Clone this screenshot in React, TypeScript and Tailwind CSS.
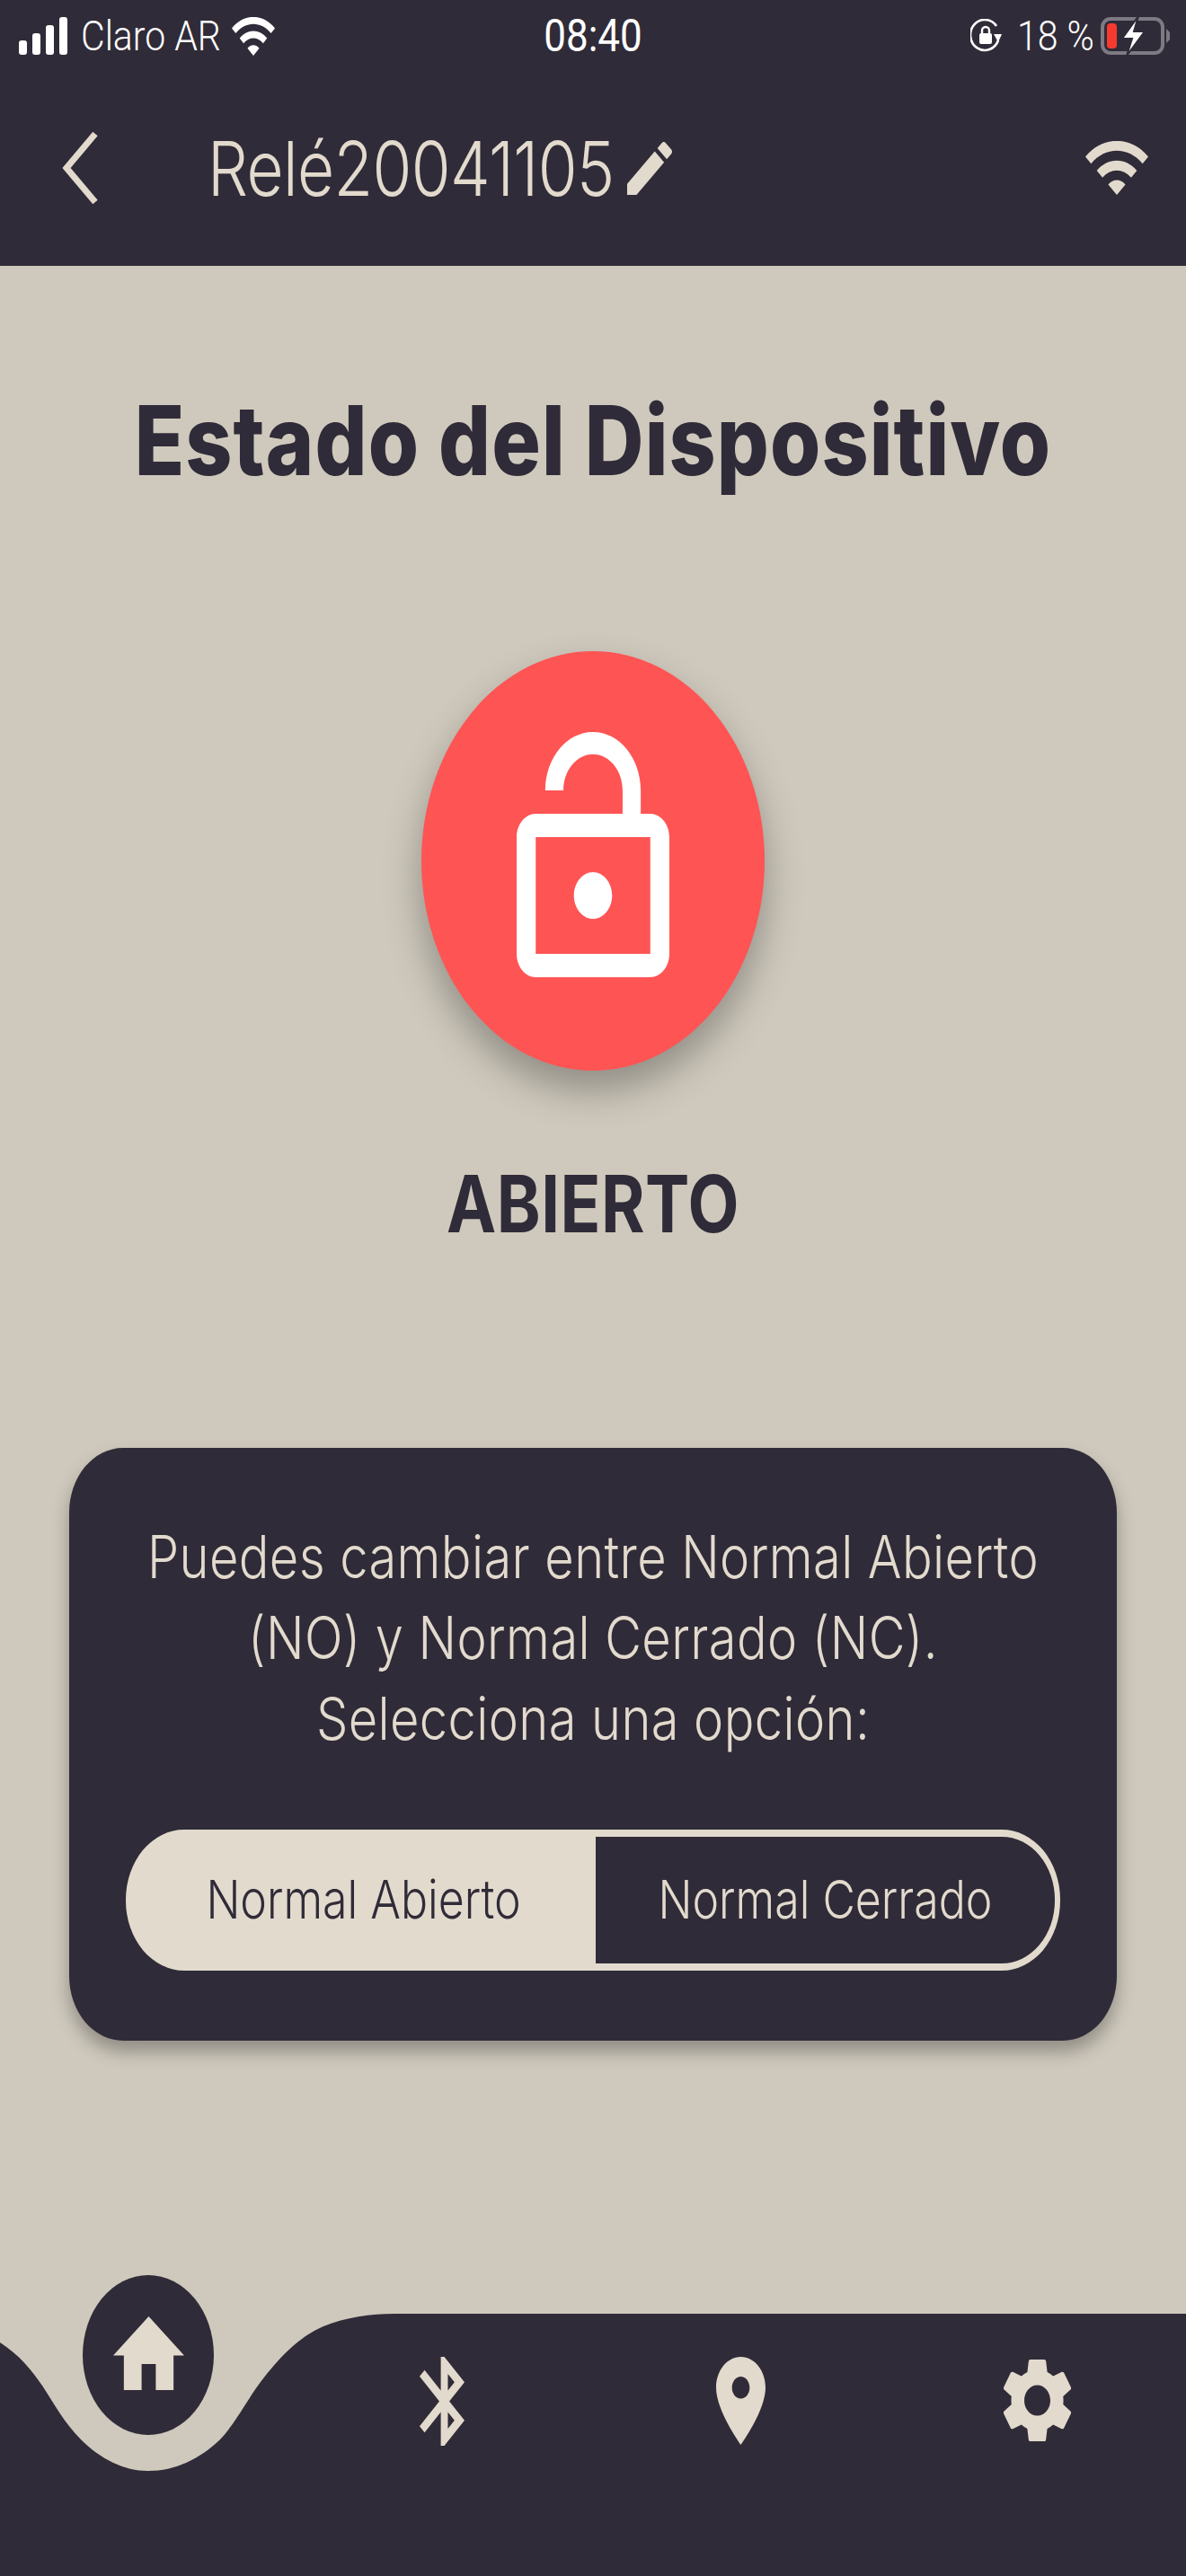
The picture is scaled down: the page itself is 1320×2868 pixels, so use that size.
const DARK = '#302b38'

function Glyph({ box, d, className }: { box: string; d: string; className: string }) {
  return (
    <svg viewBox={box} preserveAspectRatio="none" fill="currentColor" className={className}>
      <path d={d} fillRule="evenodd" />
    </svg>
  )
}

const WIFI =
  'M1 9l2 2c4.97-4.97 13.03-4.97 18 0l2-2C16.93 2.93 7.08 2.93 1 9zm8 8l3 3 3-3c-1.65-1.66-4.34-1.66-6 0zm-4-4l2 2c2.76-2.76 7.24-2.76 10 0l2-2C15.14 9.14 8.87 9.14 5 13z'
const EDIT =
  'M3 17.25V21h3.75L17.81 9.94l-3.75-3.75L3 17.25zM20.71 7.04c.39-.39.39-1.02 0-1.41l-2.34-2.34c-.39-.39-1.02-.39-1.41 0l-1.83 1.83 3.75 3.75 1.83-1.83z'
const LOCK_OPEN =
  'M12 17c1.1 0 2-.9 2-2s-.9-2-2-2-2 .9-2 2 .9 2 2 2zm6-9h-1V6c0-2.76-2.24-5-5-5S7 3.24 7 6h1.9c0-1.71 1.39-3.1 3.1-3.1 1.71 0 3.1 1.39 3.1 3.1v2H6c-1.1 0-2 .9-2 2v10c0 1.1.9 2 2 2h12c1.1 0 2-.9 2-2V10c0-1.1-.9-2-2-2zm0 12H6V10h12v10z'
const HOME = 'M10 20v-6h4v6h5v-8h3L12 3 2 12h3v8z'
const BLUETOOTH =
  'M17.71 7.71L12 2h-1v7.59L6.41 5 5 6.41 10.59 12 5 17.59 6.41 19 11 14.41V22h1l5.71-5.71-4.3-4.29 4.3-4.29zM13 5.83l1.88 1.88L13 9.59V5.83zm1.88 10.46L13 18.17v-3.76l1.88 1.88z'
const PLACE =
  'M12 2C8.13 2 5 5.13 5 9c0 5.25 7 13 7 13s7-7.75 7-13c0-3.87-3.13-7-7-7zm0 9.5c-1.38 0-2.5-1.12-2.5-2.5s1.12-2.5 2.5-2.5 2.5 1.12 2.5 2.5-1.12 2.5-2.5 2.5z'
const SETTINGS =
  'M19.14 12.94c.04-.3.06-.61.06-.94 0-.32-.02-.64-.07-.94l2.03-1.58c.18-.14.23-.41.12-.61l-1.92-3.32c-.12-.22-.37-.29-.59-.22l-2.39.96c-.5-.38-1.03-.7-1.62-.94l-.36-2.54c-.04-.24-.24-.41-.48-.41h-3.84c-.24 0-.43.17-.47.41l-.36 2.54c-.59.24-1.13.57-1.62.94l-2.39-.96c-.22-.08-.47 0-.59.22L2.74 8.87c-.12.21-.08.47.12.61l2.03 1.58c-.05.3-.09.63-.09.94s.02.64.07.94l-2.03 1.58c-.18.14-.23.41-.12.61l1.92 3.32c.12.22.37.29.59.22l2.39-.96c.5.38 1.03.7 1.62.94l.36 2.54c.05.24.24.41.48.41h3.84c.24 0 .44-.17.47-.41l.36-2.54c.59-.24 1.13-.56 1.62-.94l2.39.96c.22.08.47 0 .59-.22l1.92-3.32c.12-.22.07-.47-.12-.61l-2.01-1.58zM12 15.6c-1.98 0-3.6-1.62-3.6-3.6s1.62-3.6 3.6-3.6 3.6 1.62 3.6 3.6-1.62 3.6-3.6 3.6z'

function StatusBar() {
  return (
    <div className="flex h-[78px] items-center pt-[2px] text-white font-['Roboto',sans-serif] text-[41px] font-light leading-none">
      <svg viewBox="0 0 54 42" fill="white" className="ml-[21px] h-[42px] w-[54px]">
        <rect x="0" y="26" width="9" height="16" rx="3" />
        <rect x="15" y="18" width="9" height="24" rx="3" />
        <rect x="30" y="9" width="9" height="33" rx="3" />
        <rect x="45" y="0" width="9" height="42" rx="3" />
      </svg>
      <span className="ml-[15px] w-[153px] scale-y-[1.12] whitespace-nowrap">Claro AR</span>
      <Glyph box="1 4.5 22 15.5" d={WIFI} className="ml-[15px] h-[43px] w-[48px]" />
      <span className="ml-[299px] w-[110px] scale-y-[1.12] whitespace-nowrap text-center text-[44px] font-normal">08:40</span>
      <svg viewBox="0 0 35 38" fill="none" stroke="white" className="ml-[365px] h-[38px] w-[35px]">
        <path d="M29 8A16 17 0 1 0 31 24" strokeWidth="2.6" />
        <path d="M26 17l9 0-4 9z" fill="white" stroke="none" />
        <rect x="10" y="16" width="14" height="12" rx="2" fill="white" stroke="none" />
        <path d="M13 16v-3a4 4 0 0 1 8 0v3" strokeWidth="2.4" />
      </svg>
      <span className="ml-[17px] w-[83px] scale-y-[1.12] whitespace-nowrap">18 %</span>
      <svg viewBox="0 0 80 44" className="ml-[10px] h-[44px] w-[80px]">
        <rect x="2" y="3" width="67" height="38" rx="9" fill="none" stroke="#7d7a83" strokeWidth="4" />
        <rect x="7" y="8" width="11" height="28" rx="4" fill="#f63a30" />
        <path d="M73 14l4 4v8l-4 4z" fill="#7d7a83" />
        <path d="M42 0L24 25h11l-6 19 20-27H37z" fill="white" stroke={DARK} strokeWidth="2" />
      </svg>
    </div>
  )
}

function AppBar() {
  return (
    <div className="flex h-[218px] items-center text-[#e2dacd]">
      <svg viewBox="0 0 40 80" fill="none" stroke="currentColor" strokeWidth="7" className="ml-[69px] h-[80px] w-[40px]">
        <path d="M37 2L5 40l32 38" />
      </svg>
      <span className="ml-[122px] w-[447px] scale-y-[1.19] whitespace-nowrap text-[71px] font-light leading-none tracking-[-0.6px]">
        Relé20041105
      </span>
      <Glyph box="3 3 18 18" d={EDIT} className="ml-[20px] h-[59px] w-[50px]" />
      <Glyph box="1 4.5 22 15.5" d={WIFI} className="ml-auto mr-[42px] h-[60px] w-[70px]" />
    </div>
  )
}

function ModeSwitch() {
  return (
    <div className="mx-[63px] mt-[78px] flex h-[157px] rounded-[65px/78px] border-x-[6px] border-y-[8px] border-[#e2dacd] bg-[#e2dacd] text-[50px] font-light">
      <div className="flex w-[517px] items-center justify-center text-[#302b38]">
        <span className="scale-y-[1.19]">Normal Abierto</span>
      </div>
      <div className="flex flex-1 items-center justify-center rounded-tr-[59px_70px] rounded-br-[59px_70px] bg-[#302b38] text-[#e2dacd]">
        <span className="scale-y-[1.19]">Normal Cerrado</span>
      </div>
    </div>
  )
}

function BottomNav() {
  return (
    <div className="relative h-[292px] text-[#e2dacd]">
      <svg viewBox="0 0 1320 292" preserveAspectRatio="none" fill={DARK} className="absolute inset-0 h-full w-full">
        <path d="M0 32C22 46 36 64 47 80C60 100 72 122 90 140C112 162 138 175 165 175C195 175 222 162 245 140C262 122 275 96 290 76C310 50 332 26 360 14C385 4 412 0 440 0H1320V292H0Z" />
      </svg>
      <div className="absolute left-[92px] top-[-43px] flex h-[178px] w-[146px] items-center justify-center rounded-[50%] bg-[#302b38]">
        <Glyph box="2 3 20 17" d={HOME} className="mt-[-4px] h-[82px] w-[79px]" />
      </div>
      <div className="relative flex items-start pl-[467px] pt-[48px]">
        <Glyph box="5 2 12.71 20" d={BLUETOOTH} className="h-[99px] w-[50px]" />
        <Glyph box="5 2 14 20" d={PLACE} className="ml-[280px] h-[98px] w-[55px]" />
        <Glyph box="2.7 2 18.6 20" d={SETTINGS} className="ml-[265px] mt-px h-[95px] w-[75px]" />
      </div>
    </div>
  )
}

export default function App() {
  return (
    <div className="flex h-[2868px] w-[1320px] flex-col overflow-hidden bg-[#cfc9bd] font-['Inter',sans-serif]">
      <header className="h-[296px] bg-[#302b38]">
        <StatusBar />
        <AppBar />
      </header>

      <main className="flex flex-1 flex-col items-center">
        <h1 className="mt-[134px] flex h-[120px] items-center text-[#302b38]">
          <span className="scale-y-[1.18] whitespace-nowrap text-[91px] font-extrabold tracking-[1.1px]">Estado del Dispositivo</span>
        </h1>

        <div className="mt-[175px] flex h-[467px] w-[382px] items-center justify-center rounded-[50%] bg-[#ff5454] text-white shadow-[0_22px_44px_rgba(0,0,0,0.3)]">
          <Glyph box="4 1 16 21" d={LOCK_OPEN} className="mb-[14px] h-[273px] w-[170px]" />
        </div>

        <div className="mt-[108px] flex h-[80px] items-center text-[#302b38]">
          <span className="scale-y-[1.19] text-[74px] font-bold tracking-[0.5px]">ABIERTO</span>
        </div>

        <section className="mt-[232px] h-[660px] w-[1166px] rounded-[60px/72px] bg-[#302b38] pt-[77px] shadow-[0_12px_20px_rgba(0,0,0,0.3)]">
          <div className="text-center text-[56px] font-light tracking-[0.4px] text-[#e2dacd]">
            <p className="h-[90px] scale-y-[1.17] leading-[90px]">Puedes cambiar entre Normal Abierto</p>
            <p className="h-[90px] scale-y-[1.17] leading-[90px]">(NO) y Normal Cerrado (NC).</p>
            <p className="h-[90px] scale-y-[1.17] leading-[90px]">Selecciona una opción:</p>
          </div>
          <ModeSwitch />
        </section>
      </main>

      <BottomNav />
    </div>
  )
}
